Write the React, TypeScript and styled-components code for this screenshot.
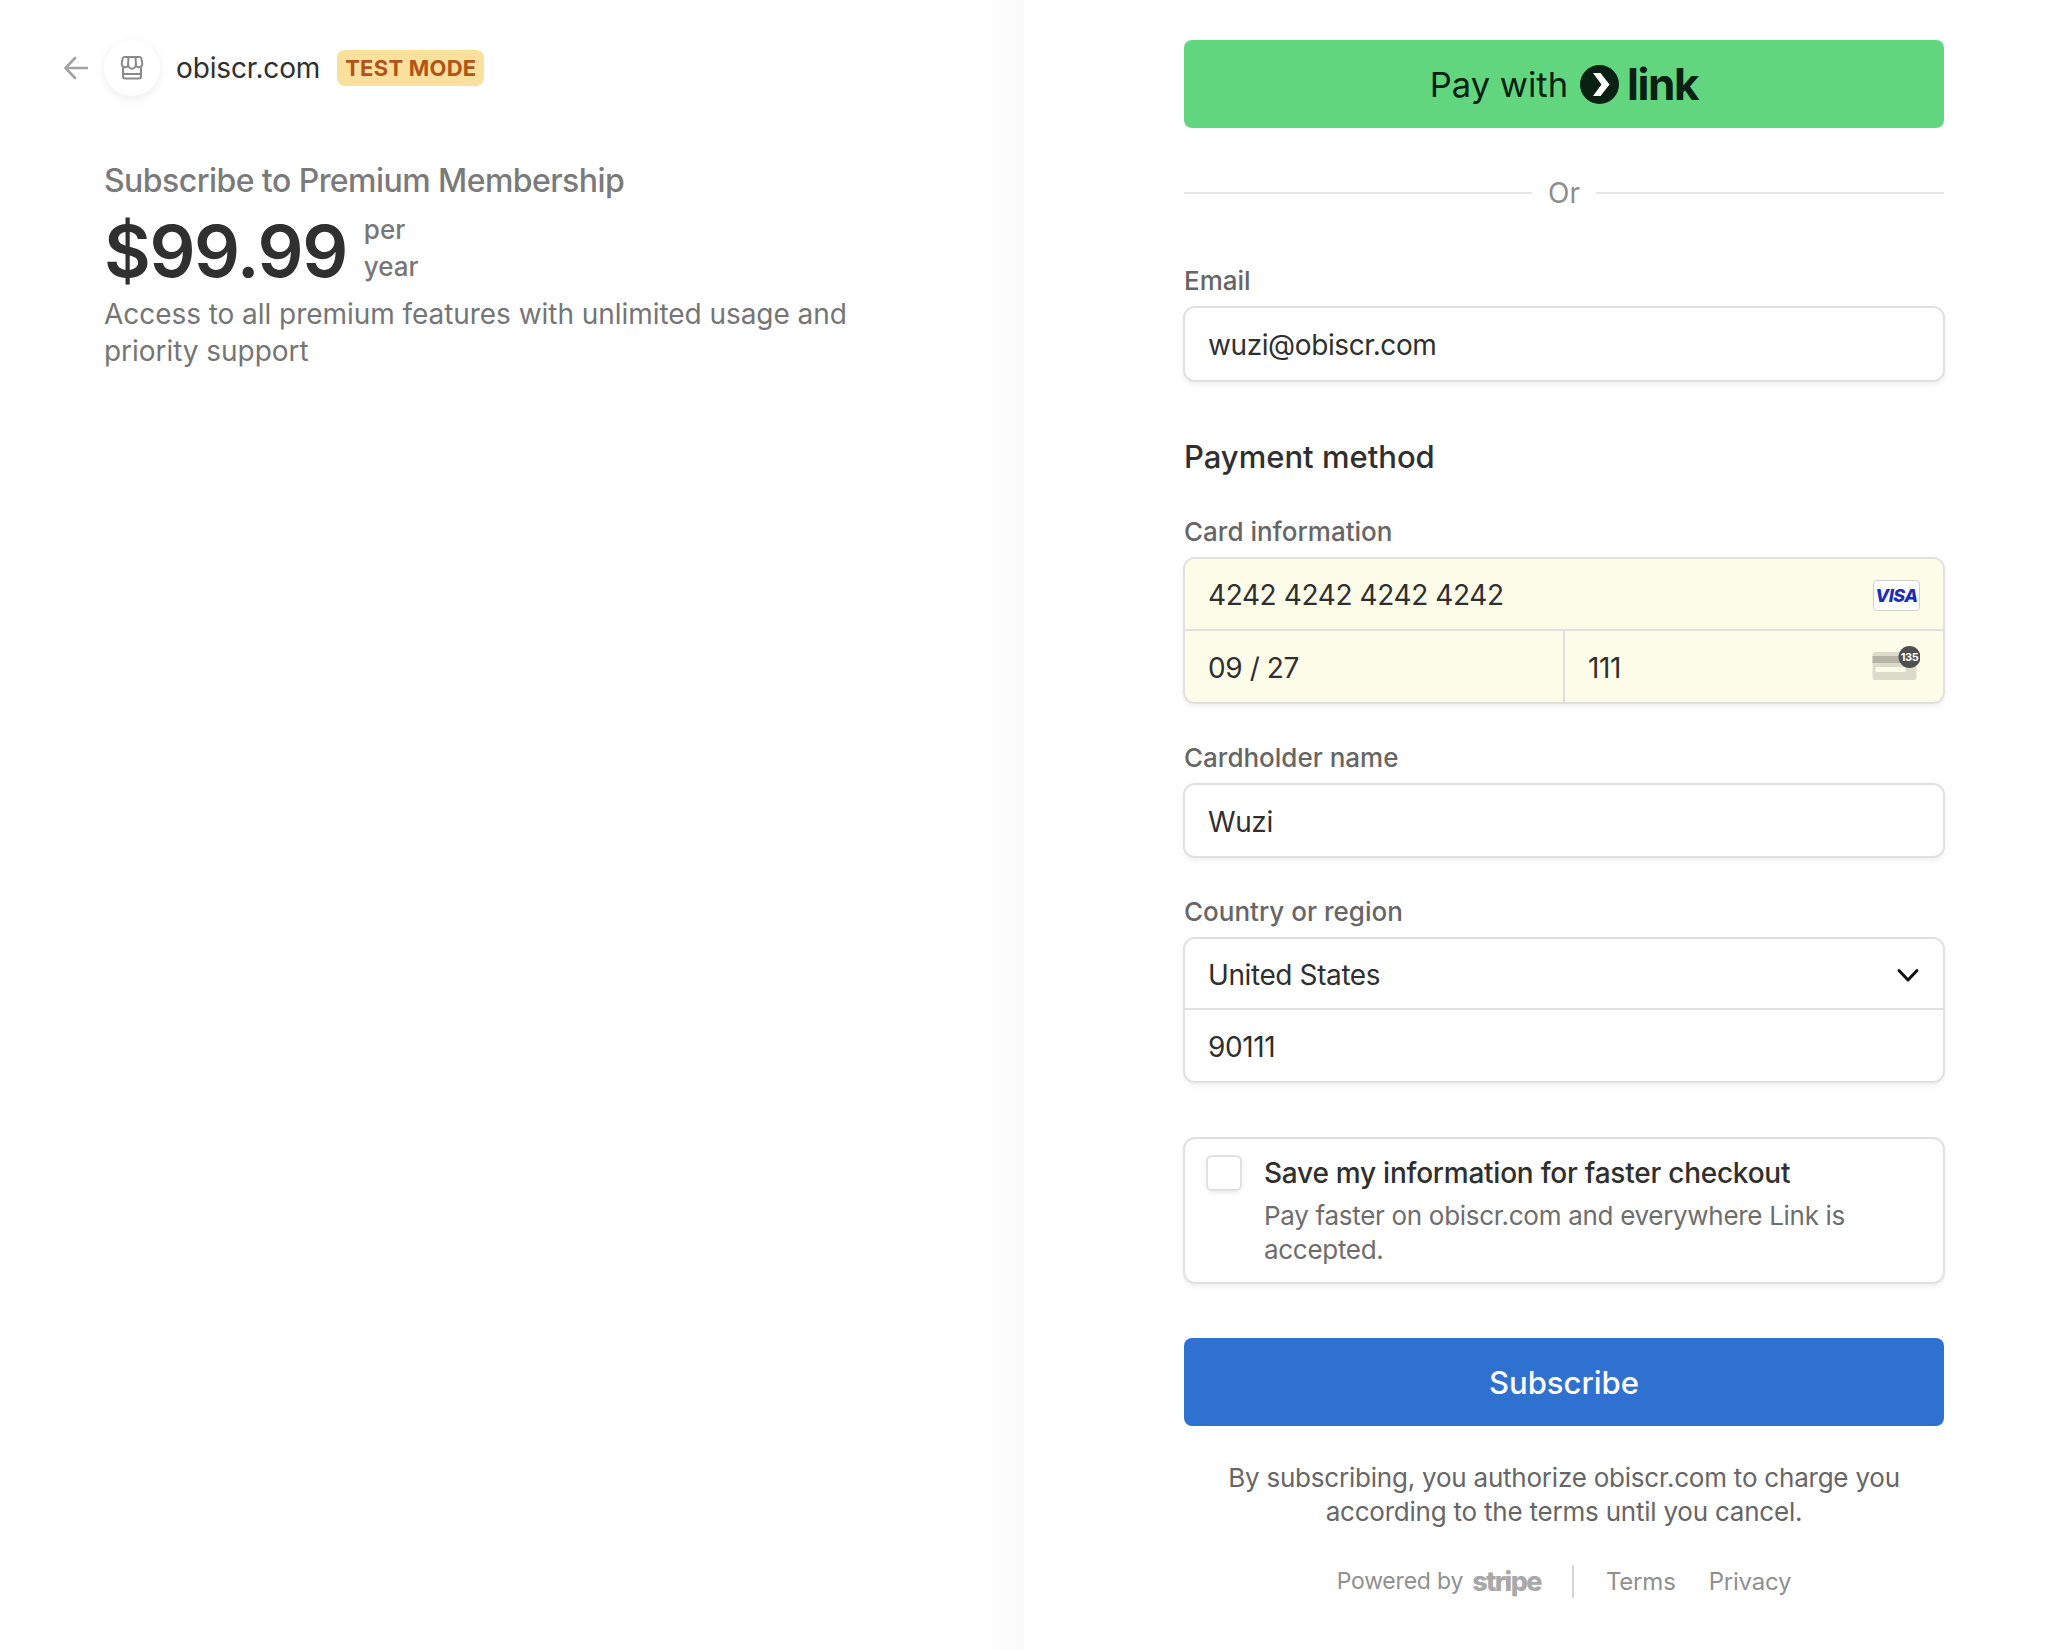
import React from 'react';
import styled, { createGlobalStyle } from 'styled-components';

const GlobalStyle = createGlobalStyle`
  html, body {
    margin: 0;
    padding: 0;
    background: #fff;
  }
  body {
    font-family: Inter, 'Liberation Sans', sans-serif;
    color: #30313d;
  }
`;

const Page = styled.div`
  display: flex;
  width: 2064px;
  height: 1650px;
  overflow: hidden;
`;

const Summary = styled.section`
  width: 1024px;
  height: 100%;
  box-sizing: border-box;
  padding: 39px 0 0 64px;
  background: linear-gradient(to right, #fff calc(100% - 40px), #fafafa);
`;

const Header = styled.header`
  display: flex;
  align-items: center;
  height: 57px;
`;

const BackArrow = styled.svg`
  width: 24px;
  height: 24px;
  margin-right: 16px;
  color: #a3a3a3;
`;

const StoreCircle = styled.div`
  width: 56px;
  height: 56px;
  border-radius: 50%;
  background: #fff;
  box-shadow: 0 3px 12px rgba(0, 0, 0, 0.07);
  display: flex;
  align-items: center;
  justify-content: center;
`;

const MerchantName = styled.span`
  margin-left: 16px;
  font-size: 28px;
  color: #2f2f2f;
  letter-spacing: -0.15px;
`;

const TestBadge = styled.span`
  margin-left: 17px;
  height: 36px;
  padding: 0 8px;
  border-radius: 8px;
  background: #fbdf9d;
  color: #b0541a;
  font-size: 22px;
  font-weight: 700;
  letter-spacing: 0.25px;
  display: flex;
  align-items: center;
`;

const Product = styled.div`
  margin: 63px 0 0 41px;
  width: 790px;
`;

const ProductTitle = styled.div`
  margin-left: -1px;
  font-size: 32px;
  line-height: 44px;
  font-weight: 500;
  color: #7a7a7a;
  letter-spacing: -0.55px;
`;

const PriceRow = styled.div`
  display: flex;
  align-items: center;
  margin-top: 5px;
  margin-left: -1px;
`;

const PriceAmount = styled.div`
  font-size: 72px;
  line-height: 86px;
  font-weight: 600;
  color: #303030;
  letter-spacing: -1.4px;
`;

const PriceTerm = styled.div`
  margin: -7px 0 0 17px;
  font-size: 26px;
  line-height: 37px;
  font-weight: 500;
  color: #777;
`;

const ProductDescription = styled.div`
  margin: 2px 0 0 -1px;
  font-size: 28px;
  line-height: 37px;
  font-weight: 400;
  color: #757575;
  letter-spacing: -0.05px;
`;

const Checkout = styled.main`
  flex: 1;
  box-sizing: border-box;
  padding: 40px 0 0 160px;
`;

const FormColumn = styled.div`
  width: 760px;
  display: flex;
  flex-direction: column;
`;

const LinkButton = styled.div`
  height: 88px;
  border-radius: 8px;
  background: #62d57f;
  color: #0a2013;
  display: flex;
  align-items: center;
  justify-content: center;
  font-size: 34.5px;
`;

const LinkIcon = styled.svg`
  width: 39px;
  height: 39px;
  margin: 0 8px 0 12px;
`;

const LinkWord = styled.span`
  font-size: 44px;
  font-weight: 700;
  letter-spacing: -1.4px;
`;

const OrDivider = styled.div`
  margin-top: 48px;
  height: 34px;
  display: flex;
  align-items: center;
  gap: 16px;
  font-size: 28px;
  color: #8d8d8d;
  &::before,
  &::after {
    content: '';
    flex: 1;
    height: 2px;
    background: #e6e6e6;
  }
`;

const FieldLabel = styled.div<{ $top: number }>`
  margin-top: ${(p) => p.$top}px;
  margin-bottom: 8px;
  font-size: 26px;
  line-height: 34px;
  font-weight: 500;
  color: #666;
`;

const SectionTitle = styled.div`
  margin-top: 55px;
  font-size: 31px;
  line-height: 40px;
  font-weight: 500;
  color: #2f2f2f;
`;

const InputBox = styled.div`
  border: 2px solid #e0e0e0;
  border-radius: 12px;
  overflow: hidden;
  box-shadow: 0 3px 5px rgba(0, 0, 0, 0.06);
  margin: 0 -1px;
  background: #fff;
`;

const InputRow = styled.div<{ $filled?: boolean; $divided?: boolean; $height: number }>`
  height: ${(p) => p.$height}px;
  display: flex;
  box-sizing: border-box;
  background: ${(p) => (p.$filled ? '#fdfce9' : '#fff')};
  border-top: ${(p) => (p.$divided ? '2px solid #e0e0e0' : 'none')};
`;

const InputCell = styled.div<{ $divided?: boolean }>`
  flex: 1;
  display: flex;
  align-items: center;
  justify-content: space-between;
  padding: 2px 23px 0;
  font-size: 28px;
  letter-spacing: -0.4px;
  color: #2f2f2f;
  border-left: ${(p) => (p.$divided ? '2px solid #e0e0e0' : 'none')};
`;

const VisaBadge = styled.span`
  width: 47px;
  height: 31px;
  box-sizing: border-box;
  border: 1px solid #cfcfcf;
  border-radius: 4px;
  background: #fff;
  display: flex;
  align-items: center;
  justify-content: center;
  color: #1a2fb5;
  font-size: 18px;
  font-weight: 800;
  font-style: italic;
  letter-spacing: -0.5px;
`;

const CvcIcon = styled.svg`
  width: 49px;
  height: 34px;
  margin: -10px 0 0 0;
`;

const Chevron = styled.svg`
  width: 26px;
  height: 26px;
  margin-right: -1px;
  color: #111;
`;

const SaveBox = styled.div`
  margin: 54px -1px 0;
  height: 147px;
  box-sizing: border-box;
  border: 2px solid #e0e0e0;
  border-radius: 12px;
  box-shadow: 0 3px 5px rgba(0, 0, 0, 0.06);
  padding: 16px 21px;
  display: flex;
  gap: 22px;
`;

const CheckBox = styled.div`
  width: 36px;
  height: 36px;
  flex-shrink: 0;
  box-sizing: border-box;
  border: 2px solid #e0e0e0;
  border-radius: 6px;
  box-shadow: 0 2px 4px rgba(0, 0, 0, 0.08);
`;

const SaveTitle = styled.div`
  font-size: 28px;
  line-height: 36px;
  font-weight: 500;
  letter-spacing: -0.24px;
  color: #2f2f2f;
`;

const SaveText = styled.div`
  margin-top: 8px;
  font-size: 26px;
  line-height: 34px;
  letter-spacing: -0.3px;
  color: #6d6d6d;
`;

const SubscribeButton = styled.div`
  margin-top: 54px;
  height: 88px;
  border-radius: 8px;
  background: #2f71d0;
  color: #fff;
  font-size: 31px;
  font-weight: 500;
  display: flex;
  align-items: center;
  justify-content: center;
`;

const Terms = styled.div`
  margin-top: 35px;
  font-size: 26px;
  line-height: 34px;
  letter-spacing: -0.22px;
  color: #666;
  text-align: center;
`;

const Footer = styled.footer`
  margin-top: 35px;
  height: 34px;
  display: flex;
  align-items: center;
  justify-content: center;
  font-size: 24px;
  letter-spacing: -0.2px;
  color: #909090;
`;

const PoweredBy = styled.span`
  font-size: 23px;
`;

const StripeWord = styled.span`
  margin-left: 9px;
  font-size: 27px;
  font-weight: 800;
  letter-spacing: -1.6px;
  color: #a8a8a8;
`;

const FooterRule = styled.span`
  width: 2px;
  height: 33px;
  margin: 0 32px 0 31px;
  background: #d6d6d6;
`;

const FooterLink = styled.span`
  & + & {
    margin-left: 33px;
  }
`;

const App = () => (
  <>
    <GlobalStyle />
    <Page>
      <Summary>
        <Header>
          <BackArrow viewBox="0 0 24 24" fill="none" stroke="currentColor" strokeWidth="2.6" strokeLinecap="round" strokeLinejoin="round">
            <path d="M23 12H2M11 2 1.5 12 11 22" />
          </BackArrow>
          <StoreCircle>
            <svg width="24" height="24" viewBox="0 0 24 24" fill="none" stroke="#8a8a8a" strokeWidth="2" strokeLinejoin="round" strokeLinecap="round">
              <path d="M4.5 1h15a2 2 0 0 1 2 1.7l.8 5.3a3.4 3.4 0 0 1-6.6 1 3.6 3.6 0 0 1-7.4 0 3.4 3.4 0 0 1-6.6-1l.8-5.3a2 2 0 0 1 2-1.7z" />
              <path d="M8.5 1.5 8 9.5M15.5 1.5 16 9.5" />
              <path d="M3 12v8.5a2 2 0 0 0 2 2h14a2 2 0 0 0 2-2V12M3 18h18" />
            </svg>
          </StoreCircle>
          <MerchantName>obiscr.com</MerchantName>
          <TestBadge>TEST MODE</TestBadge>
        </Header>
        <Product>
          <ProductTitle>Subscribe to Premium Membership</ProductTitle>
          <PriceRow>
            <PriceAmount>$99.99</PriceAmount>
            <PriceTerm>per<br />year</PriceTerm>
          </PriceRow>
          <ProductDescription>
            Access to all premium features with unlimited usage and priority support
          </ProductDescription>
        </Product>
      </Summary>
      <Checkout>
        <FormColumn>
          <LinkButton>
            Pay with
            <LinkIcon viewBox="0 0 39 39">
              <circle cx="19.5" cy="19.5" r="19.5" fill="#0a2013" />
              <path d="M13 8h7.5l9 11.5-9 11.5H13l8.5-11.5z" fill="#fff" />
            </LinkIcon>
            <LinkWord>link</LinkWord>
          </LinkButton>
          <OrDivider>Or</OrDivider>

          <FieldLabel $top={54}>Email</FieldLabel>
          <InputBox>
            <InputRow $height={72}><InputCell>wuzi@obiscr.com</InputCell></InputRow>
          </InputBox>

          <SectionTitle>Payment method</SectionTitle>

          <FieldLabel $top={38}>Card information</FieldLabel>
          <InputBox>
            <InputRow $filled $height={70}>
              <InputCell>
                4242 4242 4242 4242
                <VisaBadge>VISA</VisaBadge>
              </InputCell>
            </InputRow>
            <InputRow $filled $divided $height={73}>
              <InputCell>09 / 27</InputCell>
              <InputCell $divided>
                111
                <CvcIcon viewBox="0 0 48 34">
                  <rect x="1" y="6" width="44" height="28" rx="3" fill="#dcdbcb" />
                  <rect x="1" y="10" width="44" height="7" fill="#b5b4a6" />
                  <rect x="4" y="21" width="30" height="5" rx="1" fill="#fdfce9" />
                  <circle cx="38" cy="11" r="11" fill="#4f4f4f" />
                  <text x="38" y="15" fontSize="11" fontWeight="700" fill="#fff" textAnchor="middle" fontFamily="Inter, sans-serif" letterSpacing="-0.5">135</text>
                </CvcIcon>
              </InputCell>
            </InputRow>
          </InputBox>

          <FieldLabel $top={37}>Cardholder name</FieldLabel>
          <InputBox>
            <InputRow $height={71}><InputCell>Wuzi</InputCell></InputRow>
          </InputBox>

          <FieldLabel $top={37}>Country or region</FieldLabel>
          <InputBox>
            <InputRow $height={69}>
              <InputCell>
                United States
                <Chevron viewBox="0 0 26 26" fill="none" stroke="currentColor" strokeWidth="3" strokeLinecap="round" strokeLinejoin="round">
                  <path d="M4 8.5 13 18 22 8.5" />
                </Chevron>
              </InputCell>
            </InputRow>
            <InputRow $divided $height={73}>
              <InputCell>90111</InputCell>
            </InputRow>
          </InputBox>

          <SaveBox>
            <CheckBox />
            <div>
              <SaveTitle>Save my information for faster checkout</SaveTitle>
              <SaveText>Pay faster on obiscr.com and everywhere Link is accepted.</SaveText>
            </div>
          </SaveBox>

          <SubscribeButton>Subscribe</SubscribeButton>

          <Terms>
            By subscribing, you authorize obiscr.com to charge you
            <br />
            according to the terms until you cancel.
          </Terms>

          <Footer>
            <PoweredBy>Powered by</PoweredBy>
            <StripeWord>stripe</StripeWord>
            <FooterRule />
            <FooterLink>Terms</FooterLink>
            <FooterLink>Privacy</FooterLink>
          </Footer>
        </FormColumn>
      </Checkout>
    </Page>
  </>
);

export default App;
